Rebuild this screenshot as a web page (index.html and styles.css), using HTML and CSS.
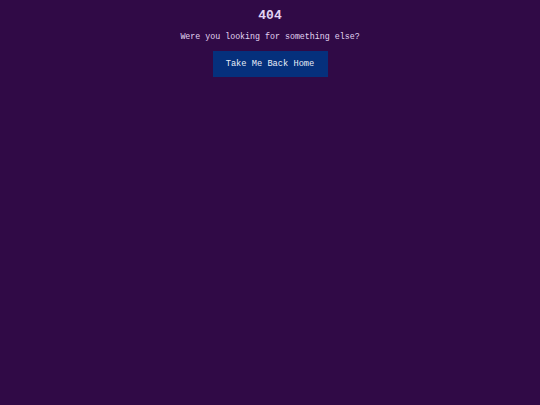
FILE: index.html
```html
<!DOCTYPE html>
<html lang="en">

<head>
    <meta charset="UTF-8">
    <title>404</title>
    <meta name="viewport" content="width=device-width, initial-scale=1.0">
    <link rel="stylesheet" href="styles.css">
</head>

<body>
    <!-- not found page -->
    <div class="wrap">
        <h1 class="code">404</h1>
        <p class="msg">Were you looking for something else?</p>
        <a class="btn" href="/">Take Me Back Home</a>
    </div>
</body>

</html>
```

FILE: styles.css
```css
html,
body {
    margin: 0;
    height: 100%;
    background-color: #300a46;
}

body {
    font-family: "Courier New", "Liberation Mono", monospace;
    color: #e2d4f2;
}

.wrap {
    display: flex;
    flex-direction: column;
    align-items: center;
    padding-top: 8px;
}

.code {
    margin: 0;
    font-size: 13px;
    font-weight: bold;
    line-height: 16px;
}

.msg {
    margin: 8px 0 0;
    font-size: 8.3px;
    line-height: 10px;
}

.btn {
    display: block;
    margin-top: 9px;
    width: 115px;
    height: 26px;
    line-height: 26px;
    text-align: center;
    background-color: #05307c;
    color: #e8eef8;
    font-size: 8.7px;
    text-decoration: none;
}
```
